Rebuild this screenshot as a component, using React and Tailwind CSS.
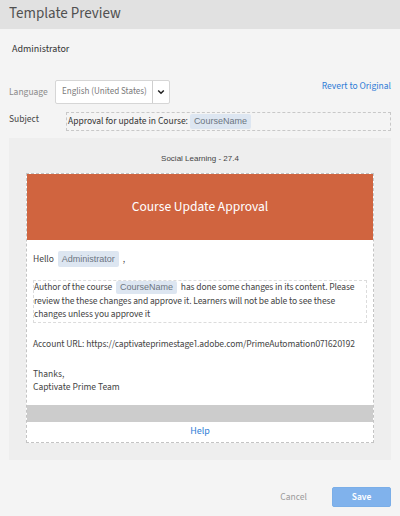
import React from "react";

const Chip = ({ children, className = "" }) => (
  <span className={`inline-block bg-[#dde6f1] text-[#6c7581] rounded-[2px] px-[4px] font-['Liberation_Sans',sans-serif] text-[9px] ${className}`}>
    {children}
  </span>
);

export default function App() {
  return (
    <div className="w-[400px] h-[516px] bg-[#f4f4f4] font-['Source_Sans_3',sans-serif] proportional-nums text-[#4b4b4b] overflow-hidden">
      <div className="h-[29px] bg-[#e1e1e1] px-[9px] flex items-center text-[15px] text-[#505050]">
        Template Preview
      </div>
      <div className="pl-[12px] pt-[13px] h-[51px] text-[10px] text-[#333]">Administrator</div>
      <div className="flex items-start px-[9px]">
        <div className="w-[46px] pt-[5px] text-[9.5px] text-[#8a8a8a]">Language</div>
        <div className="h-[24px] w-[115px] bg-white border border-[#d6d6d6] rounded-[2px] flex items-center">
          <div className="flex-1 pl-[6px] text-[9px] text-[#7a7a7a] whitespace-nowrap">English (United States)</div>
          <div className="w-[17px] h-full border-l border-[#cfcfcf] flex items-center justify-center">
            <svg width="8" height="6" viewBox="0 0 8 6"><path d="M1.2 1.5 L4 4.3 L6.8 1.5" stroke="#222" strokeWidth="1.5" fill="none" /></svg>
          </div>
        </div>
        <div className="flex-1 text-right text-[9.5px] text-[#2e7bd6] leading-[12px]">Revert to Original</div>
      </div>
      <div className="flex items-start px-[9px] mt-[8px]">
        <div className="w-[57px] text-[9.5px] text-[#444]">Subject</div>
        <div className="flex-1 h-[19px] border border-dashed border-[#c8c8c8] flex items-center text-[9.5px] text-[#333] pl-[1px]">
          Approval for update in Course:&nbsp;
          <Chip className="leading-[15px]">CourseName</Chip>
        </div>
      </div>
      <div className="mx-[9px] mt-[7px] h-[322px] bg-[#eeeeee] pt-[15px] px-[17px]">
        <div className="text-center text-[8px] font-['Liberation_Sans',sans-serif] text-[#444] leading-[12px]">Social Learning - 27.4</div>
        <div className="mt-[8px] border border-dashed border-[#c4c4c4] bg-white">
          <div className="h-[66px] bg-[#d0643f] flex items-center justify-center text-white text-[13.5px]">Course Update Approval</div>
          <div className="px-[6px] pt-[11px] text-[9.5px] text-[#444]">
            <div className="flex items-center">
              Hello&nbsp;
              <Chip className="mx-[2px] leading-[16px]">Administrator</Chip>&nbsp;,
            </div>
            <div className="mt-[13px] border border-dashed border-[#dcdcdc] leading-[13.5px] tracking-[-0.1px]">
              Author of the course <Chip className="mx-[2px] px-[3px] leading-[13px] tracking-normal">CourseName</Chip> has done some changes in its content. Please review the these changes and approve it. Learners will not be able to see these changes unless you approve it
            </div>
            <div className="mt-[14px] whitespace-nowrap tracking-[-0.1px]">Account URL: https://captivateprimestage1.adobe.com/PrimeAutomation071620192</div>
            <div className="mt-[17px] leading-[13px]">Thanks,<br />Captivate Prime Team</div>
          </div>
          <div className="mt-[11px] h-[17px] bg-[#cccccc]"></div>
          <div className="h-[20px] flex items-center justify-center text-[10px] text-[#2e7bd6]">Help</div>
        </div>
      </div>
      <div className="flex justify-end items-center px-[9px] mt-[27px]">
        <div className="text-[9.5px] text-[#9a9a9a] mr-[25px]">Cancel</div>
        <div className="w-[59px] h-[20px] bg-[#80b2ec] rounded-[2px] border border-[#7aaee8] flex items-center justify-center text-white text-[9.5px] font-semibold">Save</div>
      </div>
    </div>
  );
}
